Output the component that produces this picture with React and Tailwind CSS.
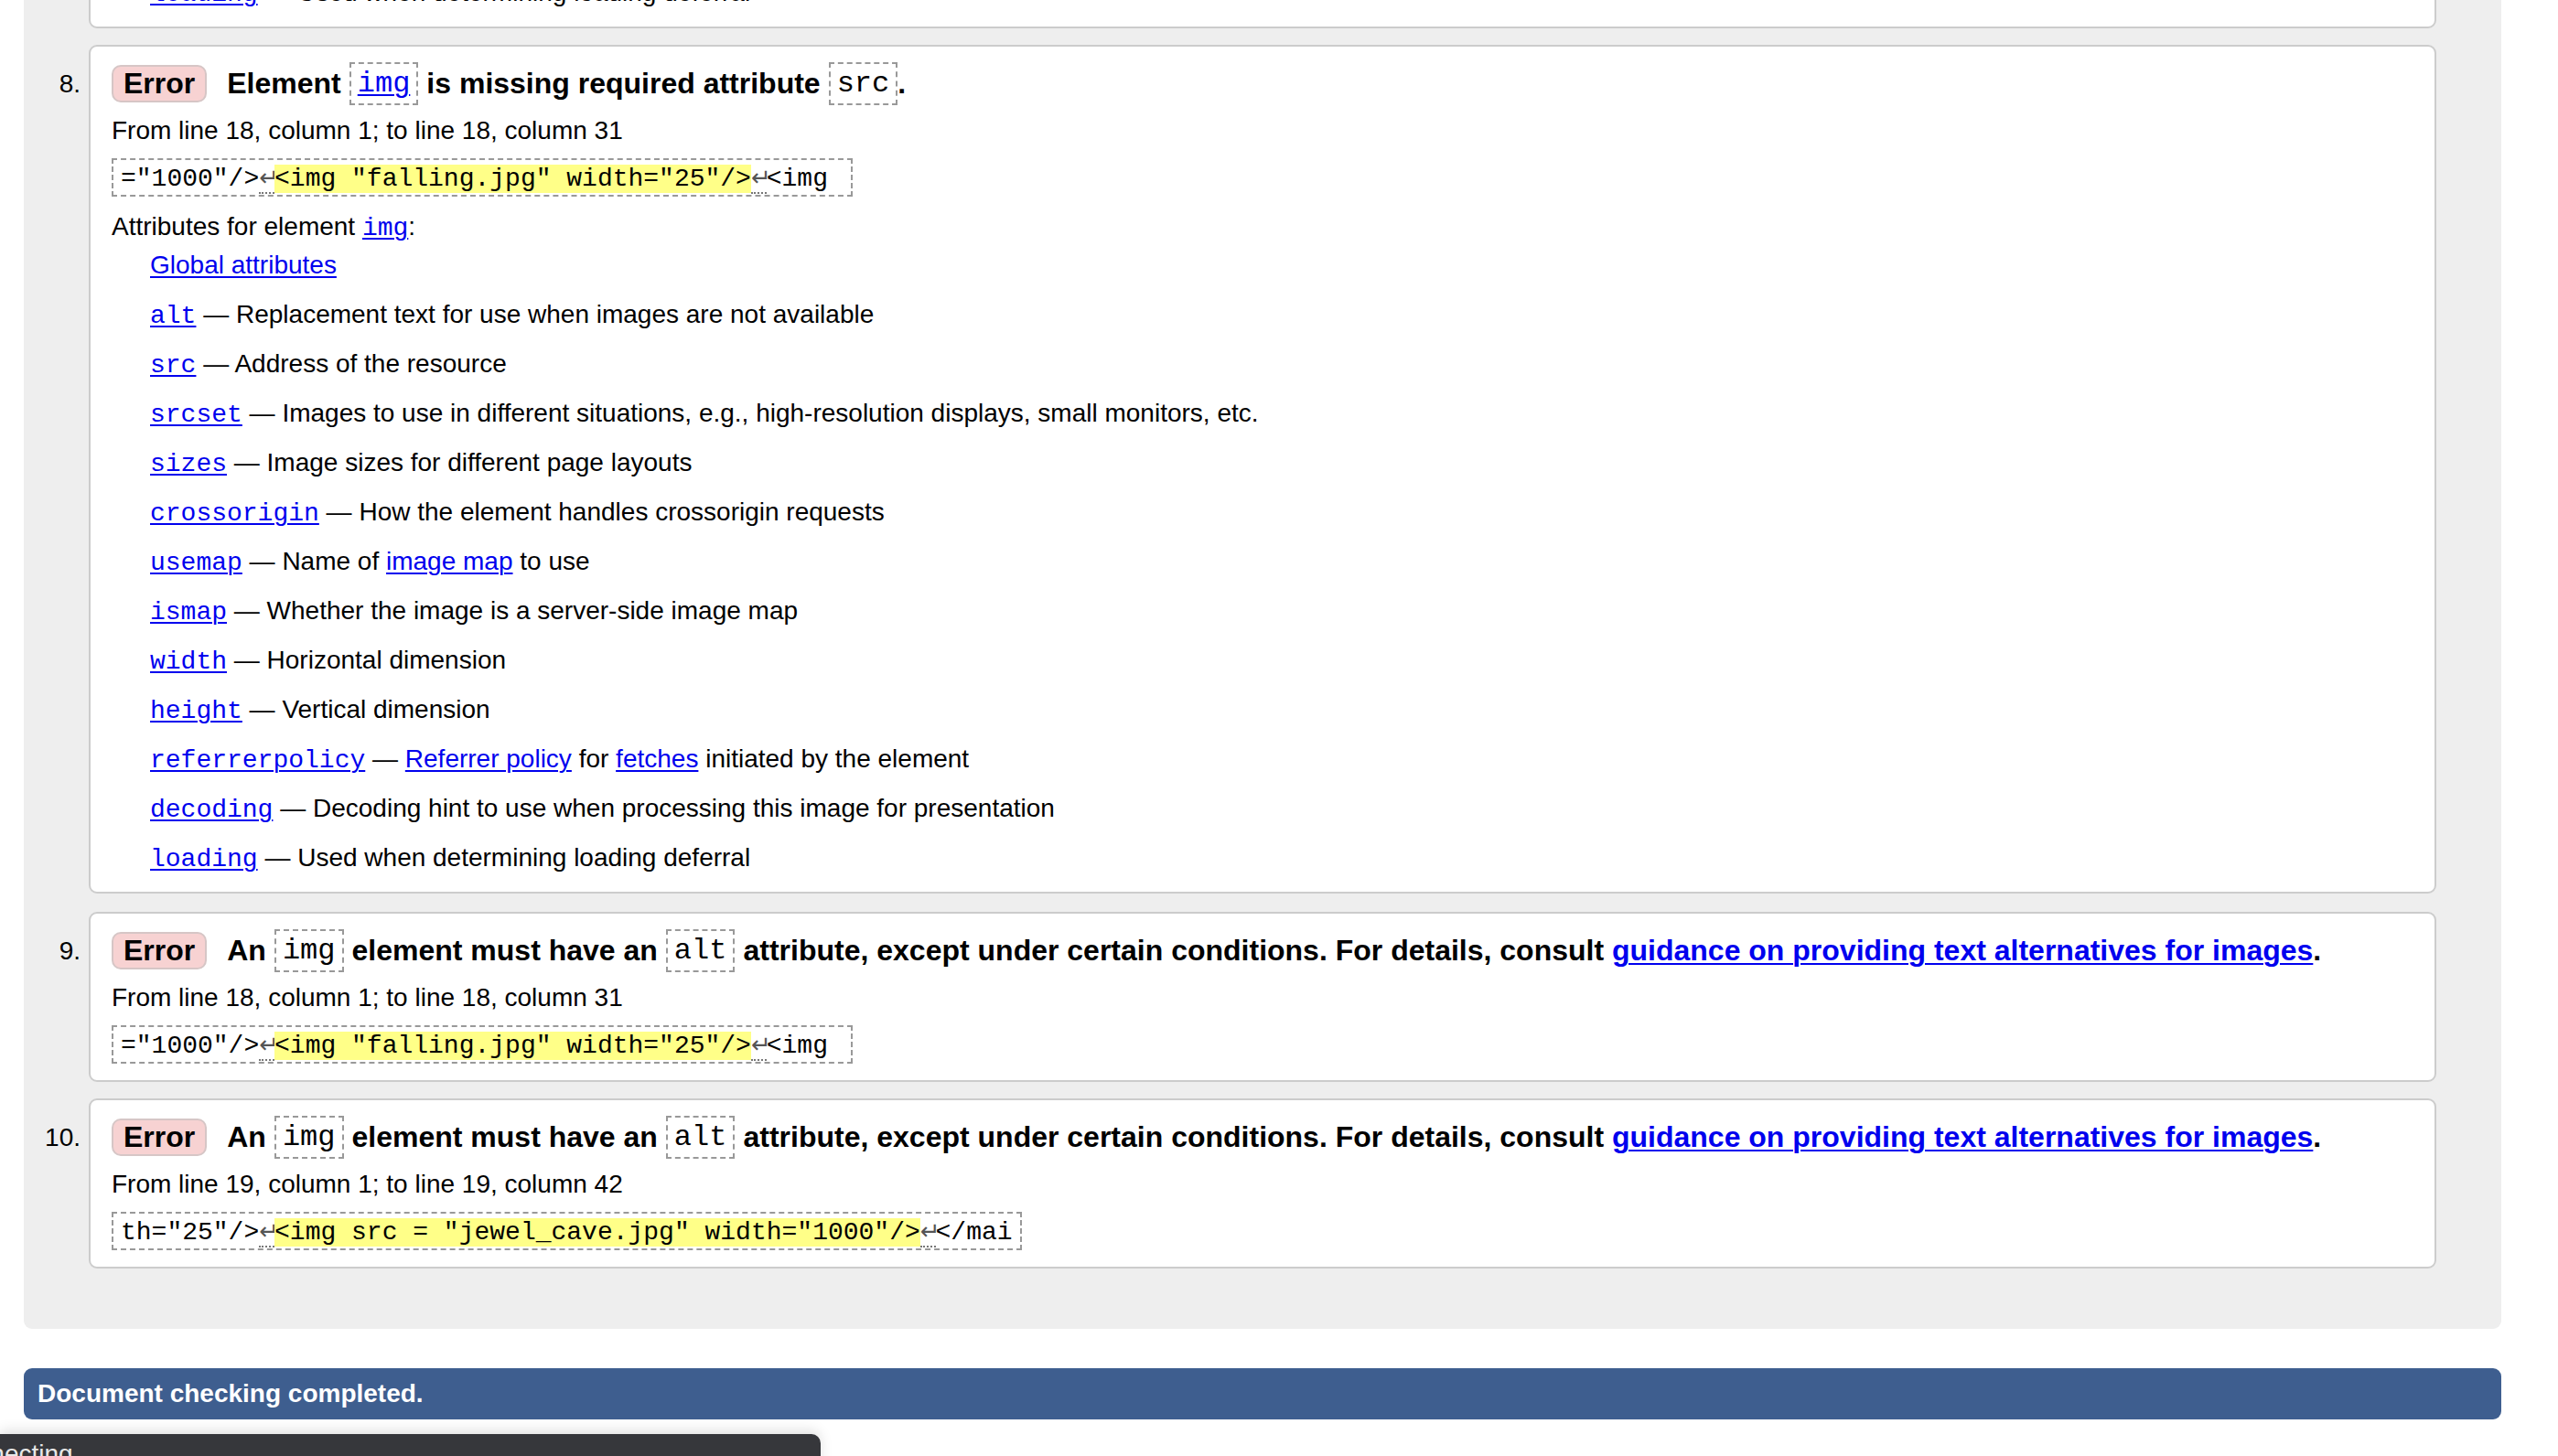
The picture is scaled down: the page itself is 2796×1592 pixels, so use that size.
import React from "react";

const sans = "font-['Liberation_Sans','Helvetica',Arial,sans-serif]";
const mono = "font-['Liberation_Mono','DejaVu_Sans_Mono','Courier_New',monospace]";
const link = "text-[#0000ee] underline underline-offset-[3px] decoration-[2px]";

// dashed box used for element / attribute names in message titles
const NameBox = ({ children, isLink, className = "" }) => (
  <span
    className={`inline-flex h-[47px] items-center border-2 border-dashed border-[#999999] px-[7px] text-[32px] font-normal leading-[37px] ${mono} ${className}`}
  >
    {isLink ? <a className={link}>{children}</a> : children}
  </span>
);

const Badge = () => (
  <span className="mr-[22px] inline-flex h-[41px] items-center rounded-[10px] border-2 border-[#d6c6c6] bg-[#f7d2d2] px-[11px] text-[32px] font-bold">
    Error
  </span>
);

const LineBreak = () => (
  <span className="inline-block w-[16.8px] overflow-visible border-b-2 border-dotted border-[#777777] font-['DejaVu_Sans',sans-serif] text-[26px] leading-[32px] text-[#555555]">
    ↵
  </span>
);

const Extract = ({ before, hit, after }) => (
  <div className="mt-[14px] flex">
    <span
      className={`inline-block h-[42px] whitespace-pre border-2 border-dashed border-[#999999] px-[8px] py-[3px] text-[28px] leading-[32px] ${mono}`}
    >
      {before}
      <LineBreak />
      <span className="bg-[#ffff88]">{hit}</span>
      <LineBreak />
      {after}
    </span>
  </div>
);

const attributes = [
  ["alt", <>Replacement text for use when images are not available</>],
  ["src", <>Address of the resource</>],
  [
    "srcset",
    <>Images to use in different situations, e.g., high-resolution displays, small monitors, etc.</>,
  ],
  ["sizes", <>Image sizes for different page layouts</>],
  ["crossorigin", <>How the element handles crossorigin requests</>],
  [
    "usemap",
    <>
      Name of <a className={link}>image map</a> to use
    </>,
  ],
  ["ismap", <>Whether the image is a server-side image map</>],
  ["width", <>Horizontal dimension</>],
  ["height", <>Vertical dimension</>],
  [
    "referrerpolicy",
    <>
      <a className={link}>Referrer policy</a> for <a className={link}>fetches</a> initiated by the
      element
    </>,
  ],
  ["decoding", <>Decoding hint to use when processing this image for presentation</>],
  ["loading", <>Used when determining loading deferral</>],
];

const AttrRow = ({ name, desc, className = "mt-[22px]" }) => (
  <div className={`${className} h-[32px] whitespace-nowrap pl-[42px] text-[28px] leading-[32px]`}>
    <a className={`${link} ${mono}`}>{name}</a> — {desc}
  </div>
);

const Item = ({ num, children, className, pb }) => (
  <div className={`flex ${className}`}>
    <div className="w-[71px] shrink-0 pr-[9px] pt-[27px] text-right text-[28px] leading-[32px]">
      {num}
    </div>
    <div
      className={`flex-1 rounded-[9px] border-2 border-[#cccccc] bg-white pl-[23px] pt-[17px] ${pb}`}
    >
      {children}
    </div>
  </div>
);

const AltTitle = () => (
  <div className="flex h-[47px] items-center whitespace-nowrap text-[32px] font-bold leading-[37px]">
    <Badge />
    <span>An</span>
    <NameBox className="mx-[9px]">img</NameBox>
    <span>element must have an</span>
    <NameBox className="mx-[9px]">alt</NameBox>
    <span>
      attribute, except under certain conditions. For details, consult{" "}
      <a className={link}>guidance on providing text alternatives for images</a>.
    </span>
  </div>
);

export default function App() {
  return (
    <div className={`relative h-[1592px] overflow-hidden bg-white text-black ${sans}`}>
      <div className="ml-[26px] w-[2708px] rounded-b-[9px] bg-[#eeeeee] pb-[66px] pr-[71px]">
        {/* tail of message 7 */}
        <div className="flex">
          <div className="w-[71px] shrink-0" />
          <div className="-mt-[26px] flex-1 rounded-[9px] border-2 border-[#cccccc] bg-white pb-[21px] pl-[23px]">
            <AttrRow className="" name="loading" desc={<>Used when determining loading deferral</>} />
          </div>
        </div>

        <Item num="8." className="mt-[18px]" pb="pb-[21px]">
          <div className="flex h-[47px] items-center whitespace-nowrap text-[32px] font-bold leading-[37px]">
            <Badge />
            <span>Element</span>
            <NameBox isLink className="mx-[9px]">
              img
            </NameBox>
            <span>is missing required attribute</span>
            <NameBox className="ml-[9px]">src</NameBox>
            <span>.</span>
          </div>
          <div className="mt-[12px] h-[32px] text-[28px] leading-[32px]">
            From line 18, column 1; to line 18, column 31
          </div>
          <Extract before={'="1000"/>'} hit={'<img "falling.jpg" width="25"/>'} after="<img " />
          <div className="mt-[17px] h-[32px] text-[28px] leading-[32px]">
            Attributes for element <a className={`${link} ${mono}`}>img</a>:
          </div>
          <div className="mt-[10px] h-[32px] pl-[42px] text-[28px] leading-[32px]">
            <a className={link}>Global attributes</a>
          </div>
          {attributes.map(([name, desc]) => (
            <AttrRow key={name} name={name} desc={desc} />
          ))}
        </Item>

        <Item num="9." className="mt-[20px]" pb="pb-[18px]">
          <AltTitle />
          <div className="mt-[12px] h-[32px] text-[28px] leading-[32px]">
            From line 18, column 1; to line 18, column 31
          </div>
          <Extract before={'="1000"/>'} hit={'<img "falling.jpg" width="25"/>'} after="<img " />
        </Item>

        <Item num="10." className="mt-[18px]" pb="pb-[18px]">
          <AltTitle />
          <div className="mt-[12px] h-[32px] text-[28px] leading-[32px]">
            From line 19, column 1; to line 19, column 42
          </div>
          <Extract
            before={'th="25"/>'}
            hit={'<img src = "jewel_cave.jpg" width="1000"/>'}
            after="</mai"
          />
        </Item>
      </div>

      <div className="ml-[26px] mt-[43px] flex h-[56px] w-[2708px] items-center rounded-[9px] bg-[#3e5e8f] pl-[15px] text-[28px] font-bold text-white">
        Document checking completed.
      </div>

      {/* browser status bubble */}
      <div className="absolute left-0 top-[1568px] h-[44px] w-[897px] overflow-hidden rounded-tr-[10px] bg-[#36373b] shadow-[0_-4px_14px_rgba(0,0,0,0.12)]">
        <div className="-ml-[62px] whitespace-nowrap pt-[6px] text-[28px] leading-[32px] text-[#e8e8e8]">
          Connecting
        </div>
      </div>
    </div>
  );
}
